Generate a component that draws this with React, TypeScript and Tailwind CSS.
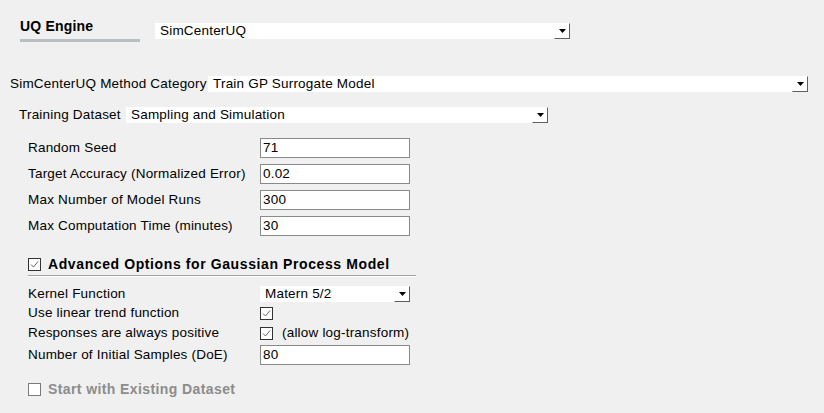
import React from "react";

const Arrow = () => (
  <div className="w-[16px] h-full flex items-center justify-center border-r border-b border-[#5f5f5f] border-t border-l border-t-white border-l-white">
    <svg width="7" height="4" viewBox="0 0 7 4">
      <polygon points="0,0 7,0 3.5,4" fill="#000" />
    </svg>
  </div>
);

const Combo = ({ value, className = "" }: { value: string; className?: string }) => (
  <div className={`h-[16px] bg-white flex items-stretch ${className}`}>
    <div className="flex-1 pl-[5px] leading-[16px] whitespace-nowrap overflow-hidden">{value}</div>
    <Arrow />
  </div>
);

const Input = ({ value }: { value: string }) => (
  <div className="w-[150px] h-[20px] bg-white border border-[#8a8a8a] pl-[2px] leading-[18px]">{value}</div>
);

const Check = ({ checked, disabled }: { checked: boolean; disabled?: boolean }) => (
  <svg width="13" height="13" viewBox="0 0 13 13" className="shrink-0">
    <rect x="0.5" y="0.5" width="12" height="12" fill="#fff" stroke={disabled ? "#7a7a7a" : "#333"} />
    {checked && (
      <polyline points="3,6.5 5.5,9 10,3.5" fill="none" stroke="#666" strokeWidth="1" />
    )}
  </svg>
);

const fields = [
  { label: "Random Seed", value: "71" },
  { label: "Target Accuracy (Normalized Error)", value: "0.02" },
  { label: "Max Number of Model Runs", value: "300" },
  { label: "Max Computation Time (minutes)", value: "30" },
];

export default function App() {
  return (
    <div
      className="w-[824px] h-[413px] bg-[#f0f0f0] text-[13.5px] tracking-[0.2px] text-black overflow-hidden flex flex-col"
      style={{ fontFamily: '"Liberation Sans", Arial, sans-serif' }}
    >
      {/* engine selector */}
      <div className="flex pt-[17px]">
        <div className="ml-[20px] w-[120px]">
          <div className="h-[18px] leading-[18px] font-bold text-[14px] tracking-[0.2px]">UQ Engine</div>
          <div className="mt-[4px] h-[3px] bg-[#b9bec3]" />
        </div>
        <Combo value="SimCenterUQ" className="ml-[15px] mt-[6px] w-[415px]" />
      </div>

      <div className="mt-[34px] flex items-center h-[16px] pl-[10px] pr-[16px]">
        <div className="w-[198px] whitespace-nowrap">SimCenterUQ Method Category</div>
        <Combo value="Train GP Surrogate Model" className="flex-1" />
      </div>

      <div className="mt-[15px] flex items-center h-[16px] pl-[19px]">
        <div className="w-[107px] whitespace-nowrap">Training Dataset</div>
        <Combo value="Sampling and Simulation" className="w-[422px]" />
      </div>

      <div className="mt-[15px] pl-[28px] flex flex-col gap-[6px]">
        {fields.map((f) => (
          <div key={f.label} className="flex items-center h-[20px]">
            <div className="w-[232px] whitespace-nowrap">{f.label}</div>
            <Input value={f.value} />
          </div>
        ))}
      </div>

      {/* advanced options */}
      <div className="mt-[21px] pl-[28px] flex items-center h-[14px]">
        <Check checked />
        <div className="ml-[7px] font-bold text-[14px] tracking-[0.6px] whitespace-nowrap">
          Advanced Options for Gaussian Process Model
        </div>
      </div>
      <div className="mt-[4px] ml-[28px] w-[388px] border-t border-[#a0a0a0] border-b border-b-white" />

      <div className="mt-[9px] pl-[28px] flex flex-col">
        <div className="flex items-center h-[16px]">
          <div className="w-[232px]">Kernel Function</div>
          <Combo value="Matern 5/2" className="w-[150px]" />
        </div>
        <div className="mt-[1px] flex items-center h-[20px]">
          <div className="w-[232px]">Use linear trend function</div>
          <Check checked />
        </div>
        <div className="flex items-center h-[20px]">
          <div className="w-[232px]">Responses are always positive</div>
          <Check checked />
          <span className="ml-[9px] whitespace-nowrap">(allow log-transform)</span>
        </div>
        <div className="mt-[2px] flex items-center h-[20px]">
          <div className="w-[232px]">Number of Initial Samples (DoE)</div>
          <Input value="80" />
        </div>
      </div>

      <div className="mt-[17px] pl-[28px] flex items-center h-[14px]">
        <Check checked={false} disabled />
        <div className="ml-[7px] font-bold text-[14px] tracking-[0.4px] text-[#8c8c8c] whitespace-nowrap">
          Start with Existing Dataset
        </div>
      </div>
    </div>
  );
}
